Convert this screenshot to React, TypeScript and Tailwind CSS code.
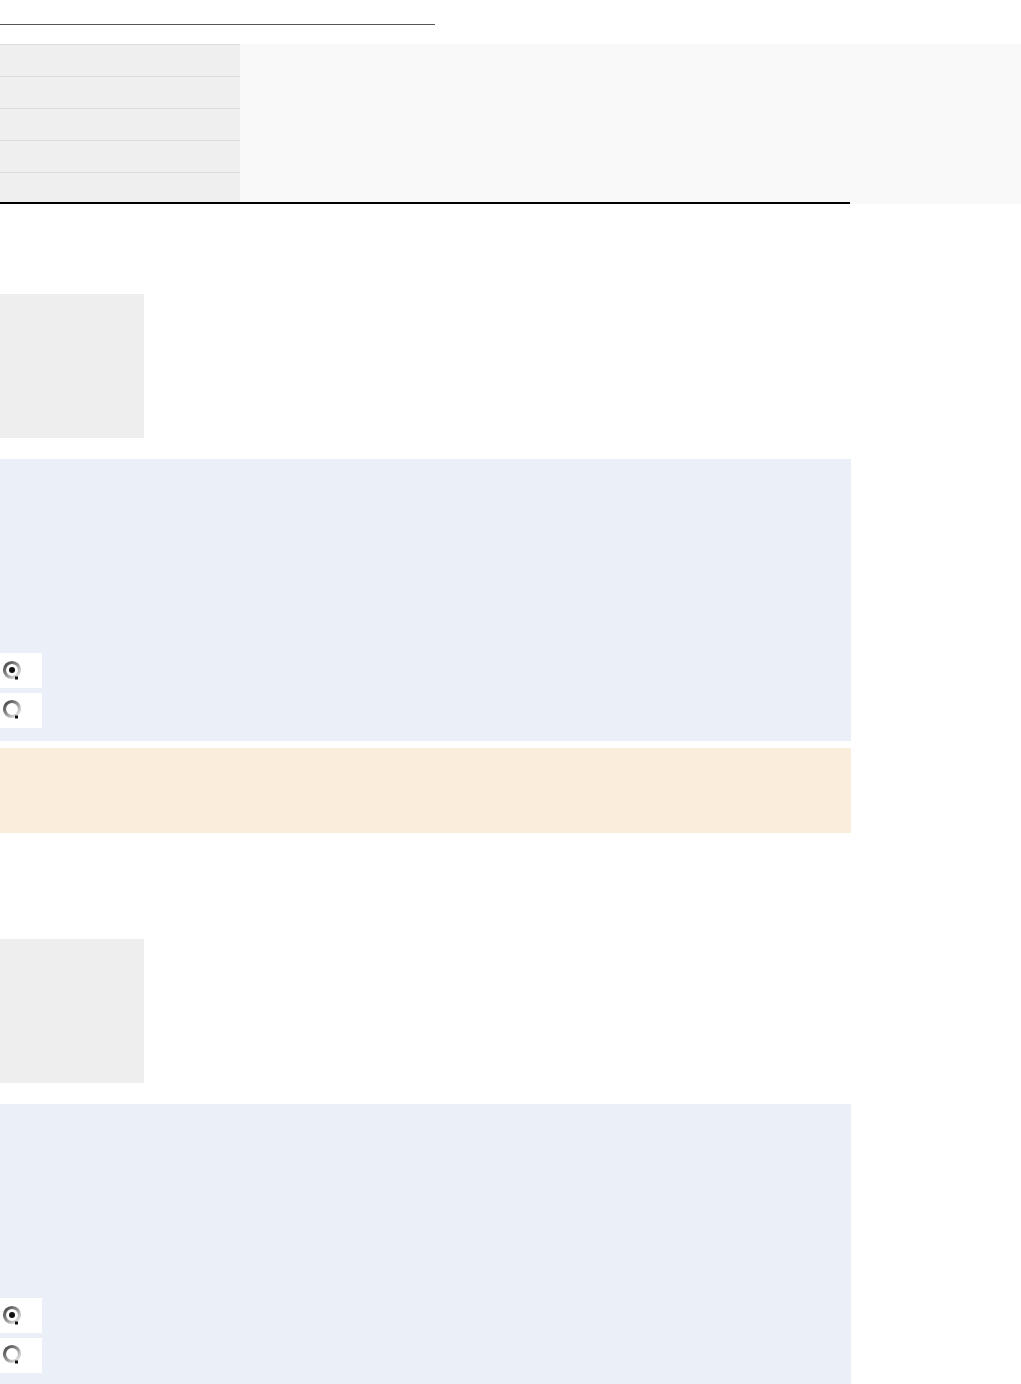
import React from 'react'

function Radio({ checked }: { checked?: boolean }) {
  const id = checked ? 'rg1' : 'rg0'
  return (
    <svg width="20" height="20" viewBox="0 0 20 20" aria-hidden="true">
      <defs>
        <linearGradient id={id} x1="0" y1="0" x2="1" y2="1">
          <stop offset="0" stopColor="#3f3f3f" />
          <stop offset="0.45" stopColor="#8c8c8c" />
          <stop offset="1" stopColor="#f4f4f4" />
        </linearGradient>
      </defs>
      <circle cx="10" cy="10" r="7.5" fill="#fff" stroke={`url(#${id})`} strokeWidth="3.2" />
      <rect x="13" y="16.5" width="3" height="3" fill="#111" />
      {checked ? <circle cx="10" cy="10" r="3" fill="#111" /> : null}
    </svg>
  )
}

function Choices() {
  return (
    <div className="flex flex-col gap-[5px]">
      <div className="flex h-[35px] w-[42px] items-start bg-white pl-[2px] pt-[7px]">
        <Radio checked />
      </div>
      <div className="flex h-[35px] w-[42px] items-start bg-white pl-[2px] pt-[6px]">
        <Radio />
      </div>
    </div>
  )
}

function Question({ last }: { last?: boolean }) {
  return (
    <div className="flex flex-col">
      <div className="h-[144px] w-[144px] bg-[#eeeeee]" />
      <div className={`mt-[21px] flex w-[851px] flex-col bg-[#ebeff7] pt-[194px] ${last ? 'pb-[40px]' : 'pb-[13px]'}`}>
        <Choices />
      </div>
    </div>
  )
}

export default function App() {
  const rows = [0, 1, 2, 3, 4]
  return (
    <div className="min-h-[1384px] bg-white font-['Liberation_Sans',sans-serif]">
      <div className="pt-[24px]">
        <div className="h-px w-[435px] bg-[#555555]" />
      </div>

      <div className="mt-[19px] flex flex-col">
        <div className="flex h-[158px]">
          <div className="flex w-[240px] flex-col bg-[#efeff0]">
            {rows.map((r) => (
              <div key={r} className={`border-t border-[#dcdce0] ${r === 4 ? 'h-[30px]' : 'h-[32px]'}`} />
            ))}
          </div>
          <div className="flex-1 bg-[#f9f9f9]" />
        </div>
        <div className="flex h-[2px]">
          <div className="w-[850px] bg-black" />
          <div className="flex-1 bg-[#f9f9f9]" />
        </div>
      </div>

      <div className="mt-[90px]">
        <Question />
      </div>

      <div className="mt-[7px] h-[85px] w-[851px] bg-[#faeddb]" />

      <div className="mt-[106px]">
        <Question last />
      </div>
    </div>
  )
}
